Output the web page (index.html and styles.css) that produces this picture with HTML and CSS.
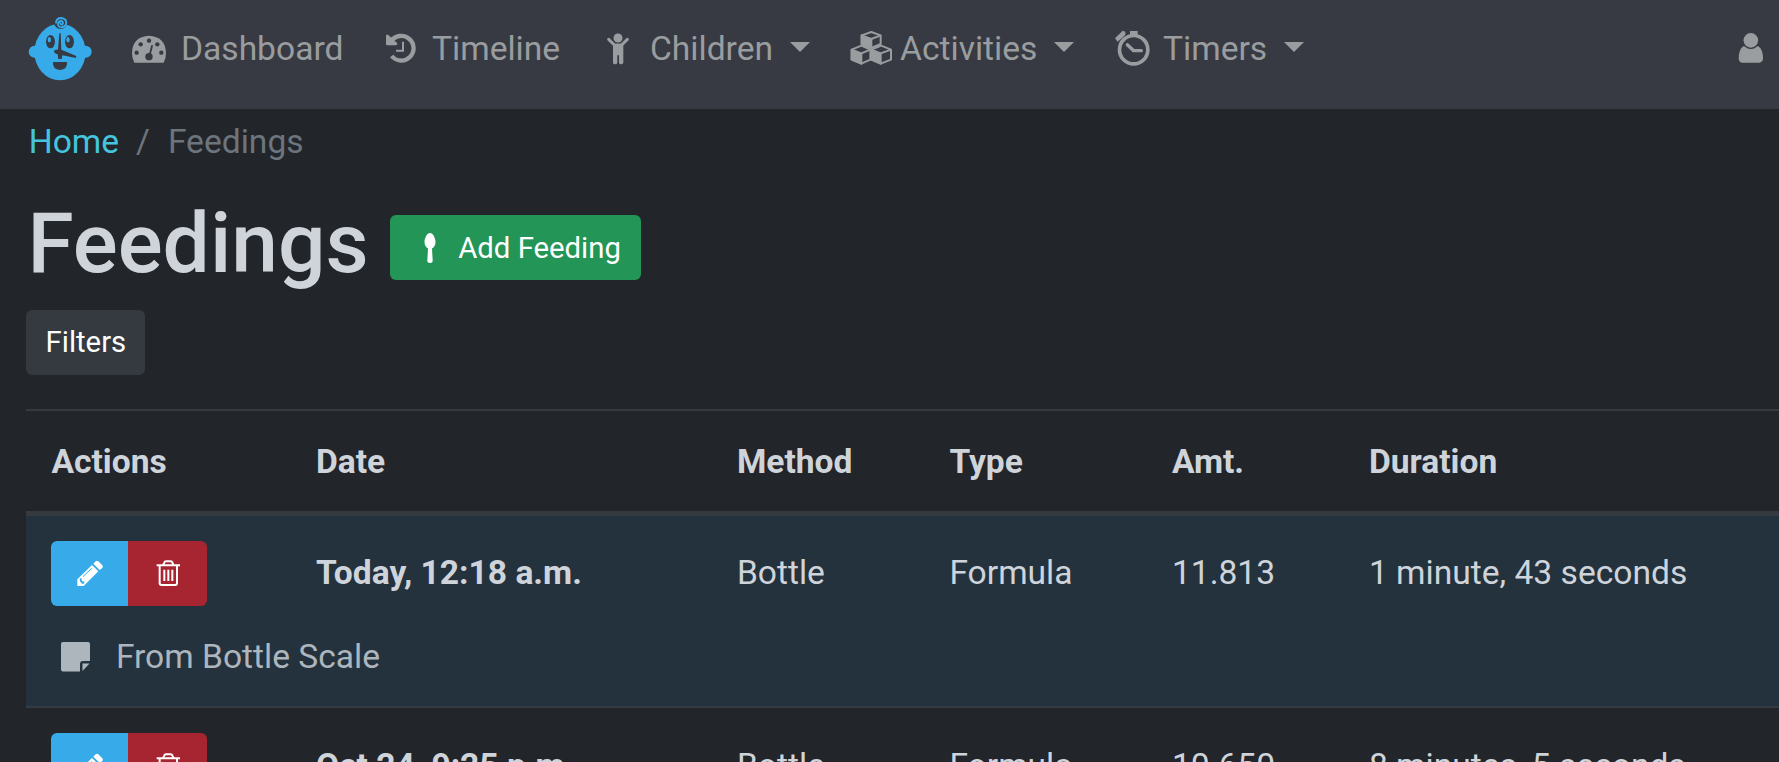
FILE: index.html
```html
<!DOCTYPE html>
<html lang="en">
<head>
<meta charset="utf-8">
<title>Feedings</title>
<link rel="stylesheet" href="styles.css">
</head>
<body>
<svg class="defs" aria-hidden="true">
  <symbol id="pencil" viewBox="108 81 90 90">
    <path fill="#fff" d="M115 145 159 102 178 121 134 165H115Z"/>
    <path fill="#fff" d="M163 98 170 91Q174 87 178 91L190 103Q193 107 190 111L182 117Z"/>
    <path fill="none" stroke="#37abe9" stroke-width="3" d="M132 137 158 112"/>
    <path fill="#37abe9" d="M122 143 127 141 129 150 137 152 134 158 129 158 123 151Z"/>
  </symbol>
  <symbol id="trash" viewBox="342 81 84 90">
    <path fill="none" stroke="#fff" stroke-width="6" d="M350 103H420M359 102V156Q359 162 365 162H406Q411 162 411 156V102M370 101 373 94Q374 91 378 91H392Q396 91 397 94L400 101"/>
    <path fill="none" stroke="#fff" stroke-width="6" d="M373 116V150M385 116V150M397 116V150"/>
  </symbol>
</svg>
<header class="navbar">
  <svg class="logo" viewBox="84 45 192 204">
    <g fill="#37abe9">
      <ellipse cx="180" cy="156" rx="77" ry="85"/>
      <circle cx="104" cy="155" r="18"/><circle cx="257" cy="155" r="18"/>
    </g>
    <circle cx="182" cy="67" r="20" fill="#373a42"/>
    <path fill="none" stroke="#37abe9" stroke-width="5.500" stroke-linecap="round" d="M168 68Q169 54 184 54Q199 56 199 69Q197 81 183 82Q173 80 174 70Q177 62 185 63Q192 67 187 73Q182 75 181 70"/>
    <g fill="#373a42">
      <ellipse cx="151.500" cy="125" rx="13.500" ry="20"/><ellipse cx="208.500" cy="125" rx="13.500" ry="20"/>
      <path d="M178 100H182L184 149 229 168 228 174 187 166 185 177H175L173 163Q162 160 162 154Q164 147 174 149Z"/>
      <path d="M159 186H201Q203 209 180 210Q157 209 159 186Z"/>
    </g>
    <ellipse cx="148" cy="119" rx="5" ry="8" fill="#37abe9"/><ellipse cx="204" cy="119" rx="5" ry="8" fill="#37abe9"/>
  </svg>
  <nav class="links">
    <a class="link"><svg class="ic-dash" viewBox="390 84 114 120">
      <path fill="#9a9d9f" d="M403 188Q396 176 396 158Q398 110 447 107Q496 110 498 158Q498 176 491 188Z"/>
      <g fill="#373a42"><circle cx="410" cy="158" r="6.500"/><circle cx="422" cy="133" r="6.500"/><circle cx="447" cy="122" r="6.500"/><circle cx="472" cy="133" r="6.500"/><circle cx="484" cy="158" r="6.500"/><circle cx="447" cy="170" r="11"/></g>
      <path stroke="#373a42" stroke-width="5.500" stroke-linecap="round" d="M449 165 456 138"/></svg><span>Dashboard</span></a>
    <a class="link"><svg class="ic-time" viewBox="72 84 102 120">
      <path fill="none" stroke="#9a9d9f" stroke-width="13" d="M93 124A37 37 0 1 1 95 168"/>
      <path fill="#9a9d9f" d="M78 106Q80 101 85 105L112 130Q113 136 107 136H82Q78 136 78 132Z"/>
      <path fill="none" stroke="#9a9d9f" stroke-width="6" d="M129 125V152H108"/></svg><span>Timeline</span></a>
    <a class="link"><svg class="ic-child" viewBox="732 84 84 120">
      <circle cx="774" cy="114" r="13.500" fill="#9a9d9f"/>
      <path fill="none" stroke="#9a9d9f" stroke-width="9" stroke-linecap="round" d="M746 118 764 136H784L802 118"/>
      <path fill="#9a9d9f" d="M759 131H790V188Q789 193 783 193Q777 193 777 188V166H772V188Q771 193 765 193Q759 193 759 188Z"/></svg><span>Children</span><i class="caret"></i></a>
    <a class="link"><svg class="ic-cubes" viewBox="54 84 138 120">
      <g id="cubes" stroke="#9a9d9f" stroke-width="6" stroke-linejoin="round" fill="#373a42">
        <path d="M124 96 152 106V132L124 144 95 132V106Z"/><path fill="#9a9d9f" d="M95 106 124 117V144L95 132Z"/><path fill="none" d="M124 117 152 106"/>
        <path d="M94 137 121 149V179L94 191 65 179V149Z"/><path fill="#9a9d9f" d="M65 149 94 160V191L65 179Z"/><path fill="none" d="M94 160 121 149"/>
        <path d="M154 137 183 149V179L152 191 124 179V149Z"/><path fill="#9a9d9f" d="M124 149 152 160V191L124 179Z"/><path fill="none" d="M152 160 183 149"/>
      </g></svg><span>Activities</span><i class="caret"></i></a>
    <a class="link"><svg class="ic-timer" viewBox="849 84 114 120">
      <circle cx="911" cy="149" r="42.500" fill="none" stroke="#9a9d9f" stroke-width="11"/>
      <path fill="#9a9d9f" d="M900 93H923V108H900ZM855 115 878 92 886 95V105L863 125Z"/>
      <path fill="none" stroke="#9a9d9f" stroke-width="10" stroke-linejoin="round" stroke-linecap="round" d="M892 134 911 152H934"/></svg><span>Timers</span><i class="caret"></i></a>
  </nav>
  <svg class="ic-user" viewBox="171 84 84 120">
    <path fill="#9a9d9f" d="M190 139Q176 148 176 177Q178 188 187 188H238Q247 187 249 177Q249 148 235 139Z"/>
    <circle cx="212.500" cy="121" r="24" fill="#9a9d9f" stroke="#373a42" stroke-width="4"/></svg>
</header>
<main class="page">
  <div class="crumbs"><a>Home</a><span class="slash">/</span><span class="current">Feedings</span></div>
  <div class="title"><h1>Feedings</h1>
    <button class="btn add"><svg class="spoon" viewBox="0 0 12 30"><path fill="#fff" d="M6 0C9 0 11.500 5 11.500 9 11.500 12 10 14.500 8 15.500L8.700 28Q8.700 30 6 30T3.300 28L4 15.500C2 14.500 .5 12 .5 9 .5 5 3 0 6 0Z"/></svg><span>Add Feeding</span></button></div>
  <button class="btn filters">Filters</button>
  <section class="table">
    <div class="row head"><span>Actions</span><span>Date</span><span>Method</span><span>Type</span><span>Amt.</span><span>Duration</span></div>
    <div class="entry noted">
      <div class="row"><span class="actions"><button class="edit"><svg><use href="#pencil"/></svg></button><button class="delete"><svg><use href="#trash"/></svg></button></span><b>Today, 12:18 a.m.</b><span>Bottle</span><span>Formula</span><span>11.813</span><span>1 minute, 43 seconds</span></div>
      <div class="note"><svg viewBox="0 0 29 30"><path fill="#adb5bd" d="M2 0H27Q29 0 29 2V19H22Q19 19 19 22V29.500H2Q0 29.500 0 27.500V2Q0 0 2 0ZM21.500 21.500H28.500L21.500 29Z"/></svg><span>From Bottle Scale</span></div>
    </div>
    <div class="entry">
      <div class="row"><span class="actions"><button class="edit"><svg><use href="#pencil"/></svg></button><button class="delete"><svg><use href="#trash"/></svg></button></span><b>Oct 24, 9:25 p.m.</b><span>Bottle</span><span>Formula</span><span>10.650</span><span>8 minutes, 5 seconds</span></div>
    </div>
  </section>
</main>
</body>
</html>
```
FILE: styles.css
```css
* { box-sizing: border-box; }
html, body { height: 762px; overflow: hidden; }
body { margin: 0; background: #222529; color: #cfd4db; font: 33.6px/50px Roboto, sans-serif; }
svg { display: block; flex: none; }
.defs { display: none; }
.navbar { height: 108.5px; padding: 0 14px 12.5px 28px; background: #373a42; display: flex; align-items: center; color: #9a9d9f; }
.logo { width: 64px; height: 68px; margin-top: 2px; }
.links { flex: 1; margin-left: 38px; display: grid; grid-template-columns: 254px 220px 244px 265px 1fr; }
.link { display: flex; align-items: center; }
.link span { padding-top: 1px; }
.link svg, .ic-user { height: 40px; }
.ic-dash { width: 38px; margin-right: 13px; }
.ic-time { width: 34px; margin-right: 14px; }
.ic-child { width: 28px; margin-right: 18px; }
.ic-cubes { width: 46px; margin-right: 6px; }
.ic-timer { width: 38px; margin-right: 12px; }
.ic-user { width: 28px; }
.caret { border: 10px solid transparent; border-top-color: #9a9d9f; border-bottom: 0; margin: -3px 0 0 17px; }
.page { padding-left: 26.4px; }
.crumbs { display: flex; height: 50px; margin-top: 8.5px; padding-left: 2.300px; color: #6c757d; }
.crumbs a { color: #44c4dd; }
.slash { margin: 0 18px 0 17px; }
.title { display: flex; align-items: flex-start; margin-top: 24px; height: 118.5px; padding-left: 1px; }
h1 { margin: 2px 0 0; font-size: 83.9px; line-height: 100px; font-weight: 500; }
.btn { border: 0; border-radius: 6px; height: 65px; color: #fff; font: 29.3px/44px Roboto, sans-serif; display: flex; align-items: center; padding: 0; }
.add { width: 251px; background: #239556; margin: 24px 0 0 21.500px; padding-left: 34px; }
.spoon { width: 12px; height: 30px; margin-right: 22px; }
.filters { width: 119px; justify-content: center; background: #343a40; }
.table { margin-top: 34px; border-top: 2px solid #343a40; }
.row { display: grid; grid-template-columns: 264.5px 421px 212.500px 222.500px 197px 1fr; padding-left: 25px; align-items: center; white-space: nowrap; }
.head { height: 105px; padding-top: 3px; border-bottom: 5px solid #343a40; font-weight: 700; }
.entry { height: 192.5px; padding-top: 25px; border-bottom: 2px solid #343a40; }
.noted { background: #24323d; }
.actions { display: flex; height: 65.5px; width: 156px; border-radius: 6px; overflow: hidden; }
.actions button { border: 0; padding: 0; display: flex; align-items: center; justify-content: center; }
.edit { width: 77px; background: #37abe9; }
.delete { width: 79px; background: #a72431; }
.edit svg { width: 30px; height: 30px; }
.delete svg { width: 28px; height: 30px; }
.note { display: flex; align-items: center; margin-top: 26px; padding-left: 34.5px; color: #adb5bd; }
.note svg { width: 29px; height: 30px; margin-right: 26px; }
```
